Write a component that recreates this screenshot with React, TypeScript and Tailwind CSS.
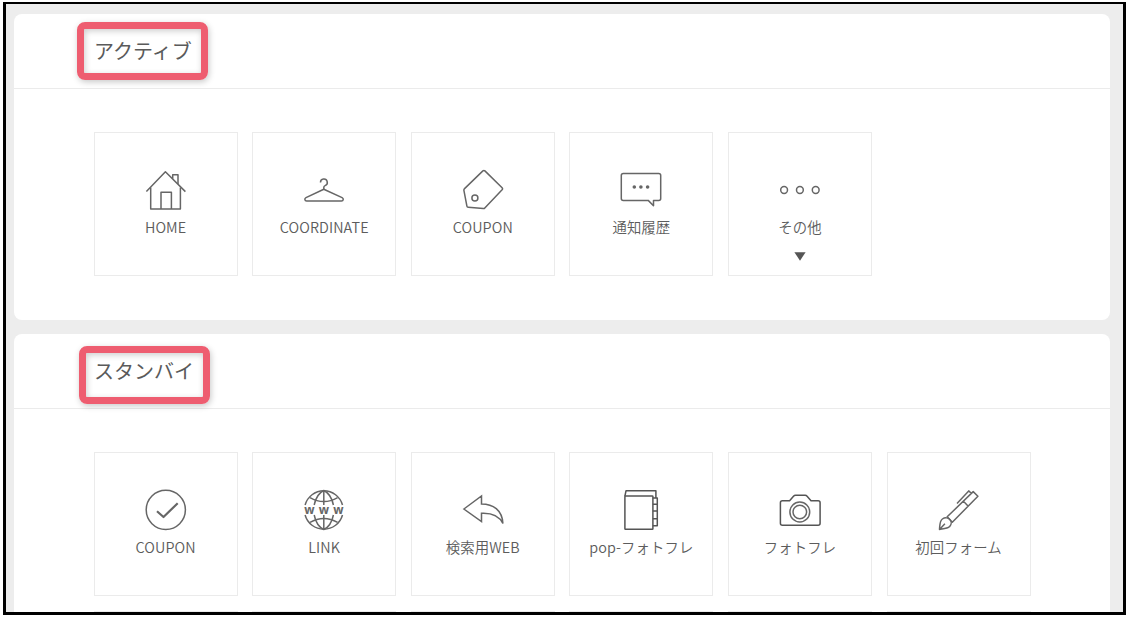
import type { ReactNode } from "react";

type MenuItem = {
  label: string;
  icon: ReactNode;
  hasMore?: boolean;
};

function Icon({ children }: { children: ReactNode }) {
  return (
    <svg
      viewBox="0 0 42 42"
      className="block h-[42px] w-[42px] shrink-0"
      fill="none"
      stroke="#666"
      strokeWidth="1.5"
      strokeLinejoin="round"
    >
      {children}
    </svg>
  );
}

const activeItems: MenuItem[] = [
  {
    label: "HOME",
    icon: (
      <Icon>
        <path d="M1.4 22.6 20.4 2.8 40.4 22.6" />
        <path d="M5.7 18.5V40h29.7V18.5M16 40V23.3h10.4V40M27.7 9.8V5.7H33v9.4" />
      </Icon>
    ),
  },
  {
    label: "COORDINATE",
    icon: (
      <Icon>
        <path d="M17.5 13.5a3.4 3.4 0 1 1 4.6 3.1q-1.3.5-1.3 2v1.7" />
        <path d="M20.8 20.3 3 28.6C1.2 29.6 1.6 32 3.6 32h34.9c2 0 2.4-2.4.6-3.4z" />
      </Icon>
    ),
  },
  {
    label: "COUPON",
    icon: (
      <Icon>
        <path d="M20.9 1.9q1-.9 2 0l17.2 16.8q.9 1 0 2L22.8 39q-.5.7-1.5.6L6.2 38.3q-1.1-.1-1.3-1.2l-3-15.8q-.1-.8.4-1.4z" />
        <circle cx="12.9" cy="29" r="3" />
      </Icon>
    ),
  },
  {
    label: "通知履歴",
    icon: (
      <Icon>
        <path d="M3.3 4.6h35.4q2 0 2 2v22.8q0 2-2 2h-5.2v5.4l-5.3-5.4H3.3q-2 0-2-2V6.6q0-2 2-2z" />
        <g fill="#666" stroke="none">
          <circle cx="14.3" cy="18" r="1.8" />
          <circle cx="20.9" cy="18" r="1.8" />
          <circle cx="27.6" cy="18" r="1.8" />
        </g>
      </Icon>
    ),
  },
  {
    label: "その他",
    hasMore: true,
    icon: (
      <Icon>
        <circle cx="5.1" cy="21" r="3.4" />
        <circle cx="20.9" cy="21" r="3.4" />
        <circle cx="36.7" cy="21" r="3.4" />
      </Icon>
    ),
  },
];

const standbyItems: MenuItem[] = [
  {
    label: "COUPON",
    icon: (
      <Icon>
        <circle cx="20.8" cy="20.8" r="19.6" />
        <path d="m12 22.2 6.5 5.8 14.2-13.8" strokeWidth="2.2" />
      </Icon>
    ),
  },
  {
    label: "LINK",
    icon: (
      <Icon>
        <path d="M2.1 16a19.4 19.4 0 0 1 37.4 0M2.1 26a19.4 19.4 0 0 0 37.4 0" />
        <path d="M20.8 1.5V16M20.8 26v14.5M11.2 16C12.6 9 15.5 4 20.8 1.5 26.1 4 29 9 30.4 16M11.2 26c1.4 7 4.3 12 9.6 14.5 5.3-2.5 8.2-7.5 9.6-14.5" />
        <path d="M7 8.6q13.8 8 27.6 0M7 33.4q13.8-8 27.6 0" />
        <g
          fill="#666"
          stroke="none"
          fontSize="12"
          fontWeight="700"
          textAnchor="middle"
          className="font-['Open_Sans',sans-serif]"
        >
          <text x="6.4" y="24.6">w</text>
          <text x="20.8" y="24.6">w</text>
          <text x="35.4" y="24.6">w</text>
        </g>
      </Icon>
    ),
  },
  {
    label: "検索用WEB",
    icon: (
      <Icon>
        <path
          d="M1.9 20 19.5 6.9V15C31 15 40.2 21 40.9 34.5 37 26.5 30 23.8 19.5 24.3v8.3z"
          strokeLinejoin="miter"
        />
      </Icon>
    ),
  },
  {
    label: "pop-フォトフレ",
    icon: (
      <Icon>
        <rect x="4.9" y="7" width="28" height="33.3" rx=".6" stroke="#555" />
        <path d="M4.9 7.2 6 1.8h29.9v6.5M32.9 9h4.4v27.7h-4.4M32.9 15.2h4.4M32.9 21.9h4.4M32.9 29.7h4.4" stroke="#555" />
      </Icon>
    ),
  },
  {
    label: "フォトフレ",
    icon: (
      <Icon>
        <path
          d="M3.4 11.7h7.2l3.9-4.5q.8-.9 2-.9h9.6q1.2 0 2 .9l3.9 4.5h7.1q2 0 2 2v20.6q0 2-2 2H3.4q-2 0-2-2V13.7q0-2 2-2z"
          stroke="#555"
        />
        <circle cx="20.8" cy="23" r="9.9" />
        <circle cx="20.8" cy="23" r="6.8" />
      </Icon>
    ),
  },
  {
    label: "初回フォーム",
    icon: (
      <Icon>
        <path d="m9.2 27.8 26-25.2 4.7 4.6-25.6 26.1zM25.2 12l4.8 4.9M19 14.4 30.7 1.9l2.6 2.4" />
        <path d="M1.5 40.4C1.9 36 1.6 32 4.4 30c2.6-1.8 6-1.4 7.6.6s1.7 5-.4 7c-2.1 2.2-6 2.2-10.1 2.8zl5.4-5.6" />
      </Icon>
    ),
  },
];

function Tile({ item }: { item: MenuItem }) {
  return (
    <div className="flex h-[144px] w-[144px] flex-col items-center border-[1.5px] border-[#ebebeb] bg-white pt-[36px]">
      {item.icon}
      <span className="mt-[6px] text-[14.4px] leading-[20px] font-[350] tracking-[0.1px] whitespace-nowrap text-[#5c5c5c]">
        {item.label}
      </span>
      {item.hasMore && (
        <svg viewBox="0 0 12 9" className="mt-[15px] h-[9px] w-[12px]" fill="#555">
          <path d="M.4.2h11.2L6 8.8z" />
        </svg>
      )}
    </div>
  );
}

// Red frame laid over a section title
function Highlight({ className }: { className: string }) {
  return (
    <div
      className={`absolute h-[58px] w-[131px] rounded-lg border-[7.5px] border-[#ee5d70] shadow-[1px_2px_6px_rgba(0,0,0,0.22),inset_1px_2px_6px_rgba(0,0,0,0.2)] ${className}`}
    />
  );
}

function Section({
  title,
  items,
  highlight,
  className,
  emptyTiles = 0,
}: {
  title: string;
  items: MenuItem[];
  highlight: string;
  className: string;
  emptyTiles?: number;
}) {
  return (
    <section className={`relative shrink-0 rounded-lg bg-white ${className}`}>
      <header className="flex h-[75px] items-center border-b-[1.5px] border-[#ebebeb] pl-[80px]">
        <h2 className="text-[20px] leading-[30px] font-normal text-[#5a5a5a]">{title}</h2>
      </header>
      <Highlight className={highlight} />
      <div className="grid grid-cols-[repeat(6,144px)] gap-[14.6px] pt-[43px] pl-[79.6px]">
        {items.map((item) => (
          <Tile key={item.label} item={item} />
        ))}
        {Array.from({ length: emptyTiles }, (_, i) => (
          <div key={i} className="h-[144px] border-[1.5px] border-[#ebebeb]" />
        ))}
      </div>
    </section>
  );
}

export default function App() {
  return (
    <div className="h-[617px] w-[1128px] overflow-hidden bg-white pt-[2px] pl-[3px] font-['Noto_Sans_CJK_JP',sans-serif]">
      <main className="flex h-[613px] w-[1123px] flex-col gap-[14px] overflow-hidden border-[3px] border-t-2 border-black bg-[#ededed] pt-[10px] pr-[13px] pl-[8px]">
        <Section
          title="アクティブ"
          items={activeItems}
          highlight="top-[8px] left-[63px]"
          className="h-[306px]"
        />
        <Section
          title="スタンバイ"
          items={standbyItems}
          highlight="top-[12px] left-[65px]"
          className="h-[480px]"
          emptyTiles={6}
        />
      </main>
    </div>
  );
}
